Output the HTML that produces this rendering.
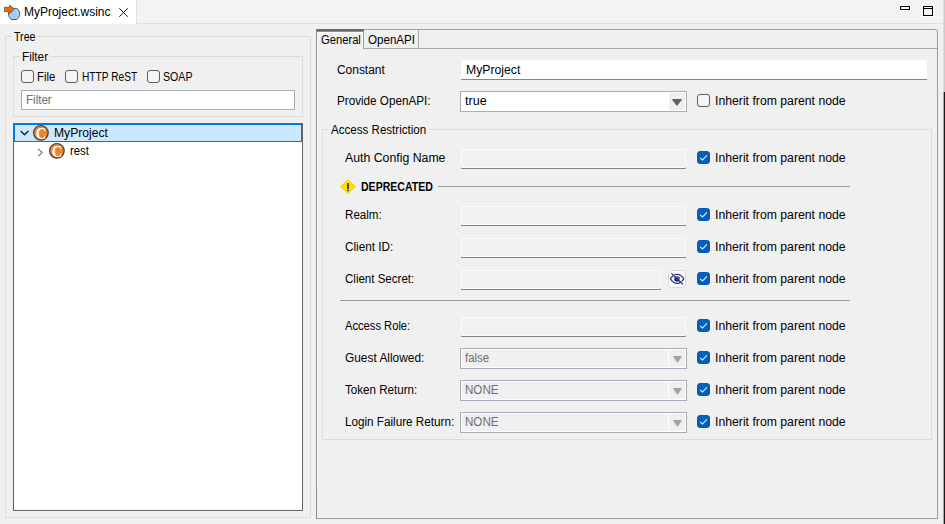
<!DOCTYPE html>
<html><head><meta charset="utf-8"><title>MyProject.wsinc</title>
<style>
html,body{margin:0;padding:0}
body{width:945px;height:524px;background:#f0f0f0;position:relative;overflow:hidden;font-family:"Liberation Sans",sans-serif;font-size:12px;line-height:14px;color:#000}
.t{position:absolute;white-space:nowrap;transform-origin:0 50%;line-height:14px;height:14px}
.b{position:absolute;box-sizing:border-box}
svg{position:absolute;overflow:visible}
.cb{position:absolute;box-sizing:border-box;width:13px;height:13px;border:1px solid #5c5c5c;border-radius:3px;background:#f5f5f5}
.cb.on{border-color:#005fb8;background:#005fb8}
.tf{position:absolute;box-sizing:border-box;height:19px;background:#f1f1f1;border:1px solid #fbfbfb;border-radius:1px;box-shadow:0 1px 0 #838383}
.co{position:absolute;box-sizing:border-box;height:21px;width:227px;border:1px solid #a8abb8;background:#fff}
.co i{position:absolute;left:208px;top:1px;width:16px;height:17px;background:#efefef}
.co.dis{background:#f0f0f0;box-shadow:inset 0 0 0 1px #fff}
.co.dis i{border-left:1px solid #fff;left:207px}
.grp{position:absolute;box-sizing:border-box;border:1px solid #dcdcdc}
.lab{position:absolute;background:#f0f0f0;height:14px}
</style></head><body>

<div class="b" style="left:0px;top:0px;width:945px;height:24px;background:#f3f3f3;border-bottom:1px solid #dfdfdf"></div>
<div class="b" style="left:0px;top:0px;width:137px;height:24px;background:#fff;border-right:1px solid #dfdfdf"></div>
<svg style="left:0px;top:0px" width="24" height="24" viewBox="0 0 24 24">
<path d="M13.2 8.4 H17.3 L19.6 12 V15.9 L17 19.5 H11.2 L8.5 15.7 V12.5 Z" fill="#add3f3" stroke="#5c5c5c" stroke-width="1" stroke-linejoin="round"/>
<path d="M11.2 14.6 h5.6 M11.8 12.2 h4.6 M11.8 17 h4.6" stroke="#8fc0ea" stroke-width="0.9" fill="none"/>
<path d="M4.4 7.3 H9.6 V5.1 L14.2 9.3 L10 13.4 L9.6 13.4 V11.6 H4.4 Z" fill="#f26d00" stroke="#5c5c5c" stroke-width="0.9" stroke-linejoin="round"/>
</svg>
<span class="t" style="left:23.70px;top:5px;transform:scaleX(0.9980);">MyProject.wsinc</span>
<svg style="left:119px;top:8px" width="9" height="9" viewBox="0 0 9 9"><path d="M0.3 0.3 L8.7 8.7 M8.7 0.3 L0.3 8.7" stroke="#1a1a1a" stroke-width="1" fill="none"/></svg>
<svg style="left:899px;top:5px" width="12" height="6" viewBox="0 0 12 6"><rect x="0" y="0" width="12" height="6" fill="#fff"/><rect x="1.5" y="1.5" width="9" height="3" fill="#fff" stroke="#000" stroke-width="1"/></svg>
<svg style="left:922px;top:5px" width="12" height="12" viewBox="0 0 12 12"><rect x="0" y="0" width="12" height="12" fill="#fff"/><rect x="1.5" y="1.5" width="9" height="9" fill="#f3f3f3" stroke="#000" stroke-width="1"/><path d="M1 3.5 H11" stroke="#000" stroke-width="1"/></svg>
<div class="b" style="left:943px;top:0px;width:1px;height:92px;background:#dedede"></div>
<div class="b" style="left:944px;top:0px;width:1px;height:92px;background:#cbcbcb"></div>
<div class="b" style="left:943px;top:92px;width:1px;height:432px;background:#a8a8a8"></div>
<div class="b" style="left:944px;top:92px;width:1px;height:432px;background:#1a1a1a"></div>
<div class="grp" style="left:5px;top:36px;width:306px;height:482px"></div>
<div class="lab" style="left:12px;top:29px;width:25px"></div>
<span class="t" style="left:14.08px;top:29.6px;transform:scaleX(0.8851);">Tree</span>
<div class="grp" style="left:13px;top:56px;width:290px;height:61px"></div>
<div class="lab" style="left:20px;top:49px;width:30px"></div>
<span class="t" style="left:22.22px;top:49.6px;transform:scaleX(0.9765);">Filter</span>
<div class="cb" style="left:21px;top:70px"></div>
<span class="t" style="left:37.05px;top:69.7px;transform:scaleX(0.9465);">File</span>
<div class="cb" style="left:65px;top:70px"></div>
<span class="t" style="left:81.65px;top:69.7px;transform:scaleX(0.8470);">HTTP ReST</span>
<div class="cb" style="left:147px;top:70px"></div>
<span class="t" style="left:163.35px;top:69.7px;transform:scaleX(0.8840);">SOAP</span>
<div class="b" style="left:21px;top:90px;width:274px;height:20px;background:#fff;border:1px solid #a8abb5"></div>
<span class="t" style="left:26.24px;top:92.6px;color:#6d6d6d;transform:scaleX(0.9647);">Filter</span>
<div class="b" style="left:13px;top:123px;width:290px;height:388px;background:#fff;border:1px solid #646464"></div>
<div class="b" style="left:14px;top:124px;width:288px;height:18px;background:#cce8ff;border:1px solid #0078d7"></div>
<svg style="left:20px;top:130px" width="9" height="7" viewBox="0 0 9 7"><path d="M0.7 1 L4.5 4.8 L8.3 1" stroke="#262626" stroke-width="1.5" fill="none"/></svg>
<svg style="left:32px;top:124px" width="18" height="18" viewBox="0 0 18 18"><circle cx="8.9" cy="8.8" r="7.3" fill="#f0832a" stroke="#4f3b28" stroke-width="1.2"/><text transform="translate(9.1 14.6) scale(0.86 1)" text-anchor="middle" font-family="Liberation Serif,serif" font-weight="bold" font-size="17" fill="#fff">C</text></svg>
<span class="t" style="left:54.09px;top:125.6px;transform:scaleX(1.0086);">MyProject</span>
<svg style="left:37px;top:148px" width="7" height="9" viewBox="0 0 7 9"><path d="M1.2 0.7 L5 4.5 L1.2 8.3" stroke="#8c8c8c" stroke-width="1.5" fill="none"/></svg>
<svg style="left:48px;top:142px" width="18" height="18" viewBox="0 0 18 18"><circle cx="8.9" cy="8.8" r="7.3" fill="#f0832a" stroke="#4f3b28" stroke-width="1.2"/><text transform="translate(9.1 14.6) scale(0.86 1)" text-anchor="middle" font-family="Liberation Serif,serif" font-weight="bold" font-size="17" fill="#fff">C</text></svg>
<span class="t" style="left:70.19px;top:143.6px;transform:scaleX(0.9464);">rest</span>
<div class="b" style="left:316px;top:29px;width:622px;height:490px;border:1px solid #8e8e8e;border-radius:0 3px 0 0;border-top-color:#a0a0a0;border-right-color:#9a9a9a;border-bottom-color:#9a9a9a"></div>
<div class="b" style="left:364px;top:48px;width:573px;height:1px;background:#a6a6a6"></div>
<div class="b" style="left:363px;top:31px;width:1px;height:18px;background:#9a9a9a"></div>
<div class="b" style="left:418px;top:30px;width:1px;height:19px;background:#a6a6a6"></div>
<div class="b" style="left:317px;top:31px;width:1px;height:457px;background:#f8f8f8"></div>
<div class="b" style="left:317px;top:32px;width:46px;height:1px;background:#fcfcfc"></div>
<div class="b" style="left:362px;top:32px;width:1px;height:17px;background:#fafafa"></div>
<div class="b" style="left:316px;top:29px;width:48px;height:3px;background:linear-gradient(#686868 0,#686868 2px,#909090 2px,#909090 3px);border-radius:2px 1px 0 0"></div>
<span class="t" style="left:320.52px;top:32.6px;transform:scaleX(0.9333);">General</span>
<span class="t" style="left:368.40px;top:32.6px;transform:scaleX(0.9660);">OpenAPI</span>
<span class="t" style="left:337.38px;top:62.7px;transform:scaleX(0.9947);">Constant</span>
<div class="b" style="left:461px;top:60px;width:466px;height:20px;background:#fff;border-bottom:1px solid #868686"></div>
<span class="t" style="left:465.78px;top:62.7px;transform:scaleX(1.0182);">MyProject</span>
<span class="t" style="left:337.03px;top:94px;transform:scaleX(0.9734);">Provide OpenAPI:</span>
<div class="co" style="left:460px;top:91px"><i></i></div>
<span class="t" style="left:464.87px;top:93.7px;transform:scaleX(1.0500);">true</span>
<svg style="left:672px;top:99px" width="10" height="7" viewBox="0 0 10 7" preserveAspectRatio="none"><path d="M0.6 0 H9.4 Q10.2 0.2 9.7 0.9 L5.6 6.2 Q5 6.8 4.4 6.2 L0.3 0.9 Q-0.2 0.2 0.6 0 Z" fill="#606060"/></svg>
<div class="cb" style="left:697px;top:94px"></div><span class="t" style="left:714.85px;top:93.9px;transform:scaleX(1.0200);">Inherit from parent node</span>
<div class="grp" style="left:322px;top:129px;width:610px;height:311px"></div>
<div class="lab" style="left:328px;top:122px;width:100px"></div>
<span class="t" style="left:331.20px;top:122.80000000000001px;transform:scaleX(0.9645);">Access Restriction</span>
<span class="t" style="left:345.10px;top:150.7px;transform:scaleX(1.0246);">Auth Config Name</span>
<div class="tf" style="left:461px;top:149px;width:225px"></div>
<div class="cb on" style="left:697px;top:151px"></div><svg style="left:697px;top:151px" width="13" height="13" viewBox="0 0 13 13"><path d="M3.1 6.8 L5.5 8.9 L10 4.3" stroke="#e8f1fa" stroke-width="1.1" fill="none"/></svg><span class="t" style="left:714.85px;top:150.9px;transform:scaleX(1.0200);">Inherit from parent node</span>
<svg style="left:340px;top:179px" width="16" height="16" viewBox="0 0 16 16"><path d="M8 0.5 L15.6 7.6 L8 14.8 L0.4 7.6 Z" fill="#ffdc00" stroke="#f4cf00" stroke-width="0.6" stroke-linejoin="round"/><rect x="7.05" y="4.2" width="1.9" height="5.8" fill="#3f3f48"/><rect x="7.05" y="10.7" width="1.9" height="1.5" fill="#3f3f48"/></svg>
<span class="t" style="left:361.24px;top:180px;transform:scaleX(0.8795);font-weight:bold;">DEPRECATED</span>
<div class="b" style="left:438px;top:186px;width:412px;height:1px;background:#9a9a9a"></div>
<span class="t" style="left:344.93px;top:207.8px;transform:scaleX(0.9672);">Realm:</span>
<div class="tf" style="left:461px;top:206px;width:225px"></div>
<div class="cb on" style="left:697px;top:208px"></div><svg style="left:697px;top:208px" width="13" height="13" viewBox="0 0 13 13"><path d="M3.1 6.8 L5.5 8.9 L10 4.3" stroke="#e8f1fa" stroke-width="1.1" fill="none"/></svg><span class="t" style="left:714.85px;top:207.9px;transform:scaleX(1.0200);">Inherit from parent node</span>
<span class="t" style="left:345.29px;top:239.8px;transform:scaleX(0.9785);">Client ID:</span>
<div class="tf" style="left:461px;top:238px;width:225px"></div>
<div class="cb on" style="left:697px;top:240px"></div><svg style="left:697px;top:240px" width="13" height="13" viewBox="0 0 13 13"><path d="M3.1 6.8 L5.5 8.9 L10 4.3" stroke="#e8f1fa" stroke-width="1.1" fill="none"/></svg><span class="t" style="left:714.85px;top:239.9px;transform:scaleX(1.0200);">Inherit from parent node</span>
<span class="t" style="left:345.30px;top:271.8px;transform:scaleX(0.9609);">Client Secret:</span>
<div class="tf" style="left:461px;top:270px;width:200px"></div>
<div class="b" style="left:668px;top:270px;width:18px;height:18px;background:#fdfdfd;border:1px solid #d9d9d9;border-radius:3.5px"></div>
<svg style="left:669px;top:271px" width="16" height="16" viewBox="0 0 16 16"><path d="M1.4 7.9 C3.4 4.6 5.8 3.4 8.1 3.4 C10.4 3.4 12.8 4.6 14.8 7.9 C12.8 11.2 10.4 12.4 8.1 12.4 C5.8 12.4 3.4 11.2 1.4 7.9 Z" fill="none" stroke="#26307f" stroke-width="1.1"/><circle cx="8" cy="8" r="2.8" fill="#1d287c"/><path d="M3 1.7 L14.7 13" stroke="#fdfdfd" stroke-width="0.7"/><path d="M2.3 2.1 L14.1 13.5" stroke="#26307f" stroke-width="1.05"/></svg>
<div class="cb on" style="left:697px;top:272px"></div><svg style="left:697px;top:272px" width="13" height="13" viewBox="0 0 13 13"><path d="M3.1 6.8 L5.5 8.9 L10 4.3" stroke="#e8f1fa" stroke-width="1.1" fill="none"/></svg><span class="t" style="left:714.85px;top:271.9px;transform:scaleX(1.0200);">Inherit from parent node</span>
<div class="b" style="left:340px;top:300px;width:510px;height:1px;background:#9a9a9a"></div>
<span class="t" style="left:345.30px;top:318.8px;transform:scaleX(0.9307);">Access Role:</span>
<div class="tf" style="left:461px;top:317px;width:225px"></div>
<div class="cb on" style="left:697px;top:319px"></div><svg style="left:697px;top:319px" width="13" height="13" viewBox="0 0 13 13"><path d="M3.1 6.8 L5.5 8.9 L10 4.3" stroke="#e8f1fa" stroke-width="1.1" fill="none"/></svg><span class="t" style="left:714.85px;top:318.9px;transform:scaleX(1.0200);">Inherit from parent node</span>
<span class="t" style="left:345.48px;top:350.8px;transform:scaleX(0.9914);">Guest Allowed:</span>
<div class="co dis" style="left:460px;top:348px"><i></i></div>
<span class="t" style="left:465.38px;top:350.8px;color:#6d6d6d;transform:scaleX(0.9535);">false</span>
<svg style="left:672.6px;top:356px" width="8.8" height="7" viewBox="0 0 10 7" preserveAspectRatio="none"><path d="M0.6 0 H9.4 Q10.2 0.2 9.7 0.9 L5.6 6.2 Q5 6.8 4.4 6.2 L0.3 0.9 Q-0.2 0.2 0.6 0 Z" fill="#a3a3a3"/></svg>
<div class="cb on" style="left:697px;top:351px"></div><svg style="left:697px;top:351px" width="13" height="13" viewBox="0 0 13 13"><path d="M3.1 6.8 L5.5 8.9 L10 4.3" stroke="#e8f1fa" stroke-width="1.1" fill="none"/></svg><span class="t" style="left:714.85px;top:350.9px;transform:scaleX(1.0200);">Inherit from parent node</span>
<span class="t" style="left:345.36px;top:382.8px;transform:scaleX(0.9676);">Token Return:</span>
<div class="co dis" style="left:460px;top:380px"><i></i></div>
<span class="t" style="left:465.03px;top:382.8px;color:#6d6d6d;transform:scaleX(0.9660);">NONE</span>
<svg style="left:672.6px;top:388px" width="8.8" height="7" viewBox="0 0 10 7" preserveAspectRatio="none"><path d="M0.6 0 H9.4 Q10.2 0.2 9.7 0.9 L5.6 6.2 Q5 6.8 4.4 6.2 L0.3 0.9 Q-0.2 0.2 0.6 0 Z" fill="#a3a3a3"/></svg>
<div class="cb on" style="left:697px;top:383px"></div><svg style="left:697px;top:383px" width="13" height="13" viewBox="0 0 13 13"><path d="M3.1 6.8 L5.5 8.9 L10 4.3" stroke="#e8f1fa" stroke-width="1.1" fill="none"/></svg><span class="t" style="left:714.85px;top:382.9px;transform:scaleX(1.0200);">Inherit from parent node</span>
<span class="t" style="left:345.13px;top:414.8px;transform:scaleX(0.9745);">Login Failure Return:</span>
<div class="co dis" style="left:460px;top:412px"><i></i></div>
<span class="t" style="left:465.03px;top:414.8px;color:#6d6d6d;transform:scaleX(0.9660);">NONE</span>
<svg style="left:672.6px;top:420px" width="8.8" height="7" viewBox="0 0 10 7" preserveAspectRatio="none"><path d="M0.6 0 H9.4 Q10.2 0.2 9.7 0.9 L5.6 6.2 Q5 6.8 4.4 6.2 L0.3 0.9 Q-0.2 0.2 0.6 0 Z" fill="#a3a3a3"/></svg>
<div class="cb on" style="left:697px;top:415px"></div><svg style="left:697px;top:415px" width="13" height="13" viewBox="0 0 13 13"><path d="M3.1 6.8 L5.5 8.9 L10 4.3" stroke="#e8f1fa" stroke-width="1.1" fill="none"/></svg><span class="t" style="left:714.85px;top:414.9px;transform:scaleX(1.0200);">Inherit from parent node</span>
</body></html>
